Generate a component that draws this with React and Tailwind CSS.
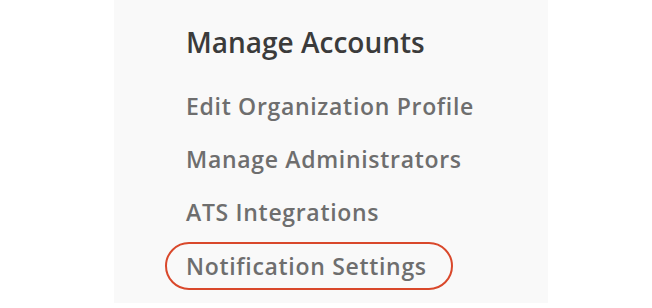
export default function App() {
  const links = [
    "Edit Organization Profile",
    "Manage Administrators",
    "ATS Integrations",
  ];

  return (
    <div className="flex h-[308px] w-[652px] bg-white">
      <div className="ml-[114px] flex h-[303px] w-[434px] flex-col bg-[#f9f9f9] pl-[72px] pt-[24px] font-['Open_Sans',sans-serif]">
        <h2 className="text-[28px] font-semibold leading-[36px] text-[#3b3b3b]">
          Manage Accounts
        </h2>
        <nav className="mt-[29px] flex flex-col gap-[19px]">
          {links.map((label) => (
            <a
              key={label}
              href="#"
              className="text-[23px] font-semibold leading-[34px] tracking-[0.03em] text-[#6e6e6e]"
            >
              {label}
            </a>
          ))}
        </nav>
        <a
          href="#"
          className="-ml-[21px] mt-[13px] flex h-[48px] w-[288px] items-center rounded-full border-2 border-[#d9482b] pl-[19px] text-[23px] font-semibold leading-[34px] tracking-[0.03em] text-[#6e6e6e]"
        >
          Notification Settings
        </a>
      </div>
    </div>
  );
}
